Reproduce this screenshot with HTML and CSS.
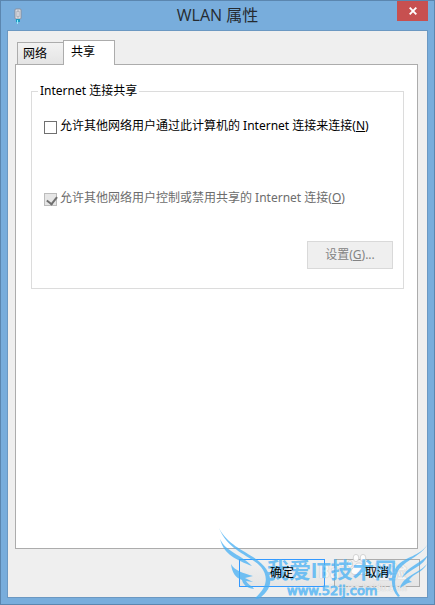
FILE: index.html
```html
<!DOCTYPE html>
<html lang="zh-CN">
    <head>
        <meta charset="utf-8">
        <title>WLAN 属性</title>
        <link rel="stylesheet" href="styles.css">
    </head>
    <body>
        <div class="window">
            <div class="titlebar">
                <svg class="titleicon" width="8" height="16" viewBox="0 0 8 16">
                    <rect x="1" y="1" width="6" height="10" rx="1" fill="#e6e9ee" stroke="#8a8f9c"/>
                    <rect x="3" y="3" width="2" height="6" fill="#fff" stroke="#777d8c" stroke-width="0.7"/>
                    <path d="M2 11h4v3H2z" fill="#1b9cc4"/>
                    <path d="M3 12h1v4H3z" fill="#8ff0ff"/>
                </svg>
                <h1 class="title">WLAN 属性</h1>
                <button class="close" type="button" aria-label="关闭">
                    <svg width="8" height="8" viewBox="0 0 8 8">
                        <path d="M0.7 0.7L7.3 7.3M7.3 0.7L0.7 7.3" stroke="#fff" stroke-width="1.9"/>
                    </svg>
                </button>
            </div>
            <div class="client">
                <div class="tabs" role="tablist">
                    <button class="tab" type="button" role="tab" aria-selected="false">网络</button>
                    <button class="tab active" type="button" role="tab" aria-selected="true">共享</button>
                </div>
                <div class="panel" role="tabpanel">
                    <fieldset class="group">
                        <legend>Internet 连接共享</legend>
                        <label class="option">
                            <input type="checkbox">
                            <span>允许其他网络用户通过此计算机的 Internet 连接来连接(<u>N</u>)</span>
                        </label>
                        <label class="option disabled">
                            <input type="checkbox" checked disabled>
                            <span>允许其他网络用户控制或禁用共享的 Internet 连接(<u>O</u>)</span>
                        </label>
                        <div class="settings">
                            <button class="button" type="button" disabled>设置(<u>G</u>)...</button>
                        </div>
                    </fieldset>
                </div>
                <div class="actions">
                    <button class="button default" type="button"><span class="caption">确定</span></button>
                    <button class="button" type="button"><span class="caption">取消</span></button>
                </div>
            </div>

            <div class="baidu">
                <div class="baiduname">
                    <span>Bai</span>
                    <svg width="24" height="22" viewBox="0 0 24 22" fill="#fff" stroke="#c8c8c8" stroke-width="0.8">
                        <ellipse cx="3" cy="10" rx="2.6" ry="3.4"/>
                        <ellipse cx="9" cy="4" rx="2.8" ry="3.6"/>
                        <ellipse cx="16" cy="4" rx="2.8" ry="3.6"/>
                        <ellipse cx="21" cy="10" rx="2.6" ry="3.4"/>
                        <path d="M12 9C8 9 8 13 5 15c-3 4 1 7 7 5 6 2 10-1 7-5-3-2-3-6-7-6z"/>
                    </svg>
                    <span>经验</span>
                </div>
                <div class="baiduurl">jingyan.baidu.com</div>
            </div>
            <div class="watermark">
                <svg class="wings" viewBox="0 0 215 76">
                    <!-- left wing -->
                    <path d="M0 0C8 16 24 22 37 31C52 42 58 57 41 70L38 71L36 70C48 60 50 49 42 39C31 27 9 23 0 0z"/>
                    <path d="M1 11C7 24 23 27 33 38C18 32 5 27 1 11z"/>
                    <path d="M12 36C16 43 24 45 34 48L26 50L34 54L27 53C30 58 33 57 35 61C27 60 24 56 23 52C17 50 13 45 12 36z"/>
                    <!-- right wing -->
                    <path d="M209 16C200 30 187 31 179 43C174 53 176 62 181 68L179 69C171 60 171 47 178 38C187 28 200 29 209 16z"/>
                    <path d="M209 27C204 39 192 40 183 50C187 39 201 36 209 27z"/>
                    <path d="M208 36C203 45 195 45 190 52L193 54C187 55 185 58 181 60C184 48 199 46 208 36z"/>
                </svg>
                <div class="sitename">我爱IT技术网</div>
                <div class="siteurl">www.52ij.com</div>
            </div>
        </div>
    </body>
</html>
```

FILE: styles.css
```css
* {
    box-sizing: border-box;
}

body {
    margin: 0;
    font-family: "Noto Sans", "Noto Sans CJK SC", sans-serif;
    font-size: 12px;
    line-height: 16px;
    color: #000;
}

button, input {
    margin: 0;
    padding: 0;
    font: inherit;
    color: inherit;
}

.window {
    position: relative;
    display: flex;
    flex-direction: column;
    min-height: 100vh;
    padding: 0 6px 6px;
    border: 1px solid #5b86af;
    background-color: #78addc;
    overflow: hidden;
}

.titlebar {
    display: grid;
    grid-template-columns: 31px 1fr 31px;
    height: 29px;
}

.titleicon {
    margin: 7px 0 0 7px;
}

.title {
    margin: 3px 0 0;
    font-family: "Open Sans", "Noto Sans CJK SC", sans-serif;
    font-size: 16px;
    font-weight: 400;
    line-height: 22px;
    text-align: center;
    color: #262b30;
}

.close {
    display: flex;
    align-items: center;
    justify-content: center;
    height: 20px;
    border: 0;
    background-color: #c75050;
}

.client {
    flex: 1;
    display: flex;
    flex-direction: column;
    padding: 9px 7px 10px;
    border: 1px solid #6b98c2;
    background-color: #efefef;
}

/* tabs */

.tabs {
    display: flex;
    align-items: flex-end;
    padding-left: 2px;
    margin-bottom: -1px;
    z-index: 0;
}

.tab {
    width: 46px;
    height: 23px;
    padding: 0 5px;
    border: 1px solid #acacac;
    border-right: 0;
    background-image: linear-gradient(#f2f2f2, #e4e4e4);
    text-align: left;
}

.tab.active {
    width: 52px;
    height: 25px;
    padding: 0 7px 3px;
    border-right: 1px solid #acacac;
    border-bottom: 0;
    background: #fff;
}

.panel {
    flex: 1;
    margin-right: 2px;
    padding: 18px 13px 20px 15px;
    border: 1px solid #acacac;
    background-color: #fff;
}

.group {
    margin: 0;
    padding: 19px 10px 19px 12px;
    border: 1px solid #dcdcdc;
}

.group legend {
    margin-left: -6px;
    padding: 0 2px;
}

/* check boxes */

.option {
    display: flex;
    gap: 3px;
    height: 16px;
    margin-bottom: 56px;
    white-space: nowrap;
}

.option input {
    appearance: none;
    flex: none;
    width: 13px;
    height: 13px;
    margin-top: 3px;
    border: 1px solid #707070;
    background-color: #fff;
}

.option.disabled {
    margin-bottom: 35px;
    color: #6d6d6d;
}

.option input:disabled {
    border-color: #bcbcbc;
    background-color: #e6e6e6;
}

.option input:checked::before {
    content: "";
    display: block;
    width: 8px;
    height: 5px;
    margin: 2px 0 0 2px;
    border: solid #707070;
    border-width: 0 0 2px 2px;
    transform: rotate(-52deg);
}

/* buttons */

.settings {
    display: flex;
    justify-content: flex-end;
}

.button {
    width: 86px;
    height: 28px;
    border: 1px solid #acacac;
    background-image: linear-gradient(#f0f0f0, #e5e5e5);
}

.button:disabled {
    border-color: #d9d9d9;
    background: #efefef;
    color: #838383;
}

.button.default {
    border-color: #3399ff;
}

.actions {
    display: flex;
    justify-content: flex-end;
    gap: 9px;
    padding-top: 10px;
}

/* captions stay readable above the watermark */
.caption {
    position: relative;
    z-index: 3;
}

/* watermarks */

.baidu, .watermark {
    position: absolute;
    pointer-events: none;
    white-space: nowrap;
}

.baidu {
    right: 27px;
    bottom: 10px;
    z-index: 1;
    color: #f6f6f6;
    opacity: 0.9;
    text-shadow: 0 0 1px #aaa;
}

.baiduname {
    display: flex;
    align-items: flex-end;
    gap: 2px;
    font-size: 17px;
    font-weight: 700;
    line-height: 20px;
}

.baiduname svg {
    margin-bottom: 6px;
}

.baiduurl {
    font-size: 9px;
    line-height: 12px;
    text-align: right;
}

.watermark {
    right: 0;
    bottom: 0;
    z-index: 2;
    width: 215px;
    height: 76px;
    color: #46b0f5;
    opacity: 0.75;
}

.wings {
    position: absolute;
    inset: 0;
    fill: #46b0f5;
    overflow: visible;
}

.sitename {
    margin: 29px 0 0 48px;
    font-family: "Liberation Sans", "Noto Sans CJK SC", sans-serif;
    font-size: 22px;
    font-weight: 700;
    line-height: 28px;
}

.siteurl {
    margin-left: 68px;
    font-family: "DejaVu Sans", sans-serif;
    font-size: 13px;
    font-weight: 400;
    line-height: 12px;
    -webkit-text-stroke: 1px #46b0f5;
}
```
